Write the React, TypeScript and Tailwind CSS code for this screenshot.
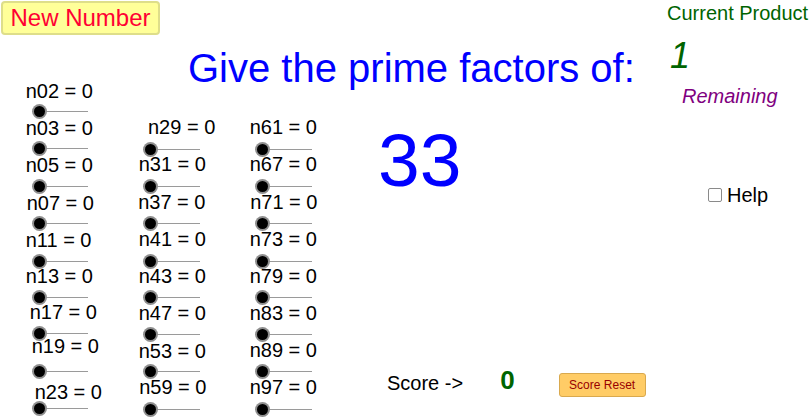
import React from "react";

type Label = { text: string; x: number; y: number };

// GeoGebra canvas: label ink-left x and vertical centre, knob centre y
const col1: Label[] = [
  { text: "n02 = 0", x: 27, y: 90.7 },
  { text: "n03 = 0", x: 27, y: 128.3 },
  { text: "n05 = 0", x: 27, y: 165.3 },
  { text: "n07 = 0", x: 28, y: 203.3 },
  { text: "n11 = 0", x: 27, y: 240 },
  { text: "n13 = 0", x: 27, y: 275.5 },
  { text: "n17 = 0", x: 31, y: 312 },
  { text: "n19 = 0", x: 33, y: 345.5 },
  { text: "n23 = 0", x: 36, y: 391.7 },
];
const col1Knobs = [110.7, 148, 185.7, 223.3, 260.7, 297.3, 333.3, 370.7, 408.3];

const col2: Label[] = [
  { text: "n29 = 0", x: 149.3, y: 127 },
  { text: "n31 = 0", x: 140, y: 163.8 },
  { text: "n37 = 0", x: 139.5, y: 201.7 },
  { text: "n41 = 0", x: 140, y: 238.7 },
  { text: "n43 = 0", x: 140, y: 275.5 },
  { text: "n47 = 0", x: 140, y: 312.5 },
  { text: "n53 = 0", x: 140, y: 351 },
  { text: "n59 = 0", x: 140.5, y: 387 },
];

const col3: Label[] = [
  { text: "n61 = 0", x: 251, y: 127 },
  { text: "n67 = 0", x: 251, y: 164 },
  { text: "n71 = 0", x: 251.5, y: 201.7 },
  { text: "n73 = 0", x: 251, y: 238.7 },
  { text: "n79 = 0", x: 251, y: 275.5 },
  { text: "n83 = 0", x: 251, y: 313 },
  { text: "n89 = 0", x: 251, y: 349.7 },
  { text: "n97 = 0", x: 251, y: 387 },
];
const col23Knobs = [149, 186, 223, 260.7, 297, 334, 371, 409];

function SliderLabel({ text, x, y }: Label) {
  return (
    <div
      className="absolute whitespace-nowrap text-[20px] leading-[20px] text-black"
      style={{ left: x - 1.3, top: y - 10 }}
    >
      {text}
    </div>
  );
}

function Slider({ x, y }: { x: number; y: number }) {
  return (
    <div className="absolute w-[49px] h-px" style={{ left: x, top: y }}>
      <div className="h-px w-full bg-[#9a9a9a]" />
      <div className="absolute -left-[5.5px] -top-[5px] w-[11px] h-[11px] rounded-full bg-black ring-2 ring-[#8f8f8f]" />
    </div>
  );
}

export default function App() {
  return (
    <div className="relative w-[809px] h-[420px] overflow-hidden bg-white font-['Liberation_Sans',Arial,sans-serif]">
      <button className="absolute left-px top-px w-[159px] h-[34px] rounded-[4px] border-2 border-[#dede8a] bg-[#ffff99] text-[24px] leading-none text-[#ff0033] flex items-center justify-center">
        New Number
      </button>

      <div className="absolute left-[188px] top-[48px] text-[40px] leading-[40px] text-[#0000ff] whitespace-nowrap">
        Give the prime factors of:
      </div>
      <div className="absolute left-[378px] top-[123px] text-[75px] leading-[75px] text-[#0000ff]">
        33
      </div>

      {/* right info */}
      <div className="absolute left-[667px] top-[3px] flex flex-col items-start whitespace-nowrap">
        <div className="text-[20px] leading-[20px] text-[#006400]">Current Product</div>
        <div className="mt-[15px] pl-[3px] text-[36px] leading-[36px] italic text-[#006400]">1</div>
        <div className="mt-[12px] pl-[15px] text-[20px] leading-[20px] italic text-[#800080]">Remaining</div>
      </div>
      <label className="absolute left-[708px] top-[185px] flex items-center gap-[5px] text-[20px] leading-[20px] text-black">
        <span className="block w-[14px] h-[14px] rounded-[2px] border border-[#8a8a8a] bg-white" />
        Help
      </label>

      {col1.map((l) => (
        <SliderLabel key={l.text} {...l} />
      ))}
      {col2.map((l) => (
        <SliderLabel key={l.text} {...l} />
      ))}
      {col3.map((l) => (
        <SliderLabel key={l.text} {...l} />
      ))}
      {col1Knobs.map((y) => (
        <Slider key={"a" + y} x={39.3} y={y} />
      ))}
      {col23Knobs.map((y) => (
        <Slider key={"b" + y} x={150.5} y={y} />
      ))}
      {col23Knobs.map((y) => (
        <Slider key={"c" + y} x={262.5} y={y} />
      ))}

      {/* score */}
      <div className="absolute left-[387px] top-[367px] flex items-start whitespace-nowrap">
        <div className="mt-[6px] text-[20px] leading-[20px] text-black">Score -&gt;</div>
        <div className="ml-[37px] text-[26px] leading-[26px] font-bold text-[#006400]">0</div>
        <button className="ml-[44px] mt-[6px] w-[87px] h-[24px] rounded-[3px] border border-[#d9a94e] bg-[#ffcc66] text-[12px] leading-none text-[#990000] flex items-center justify-center">
          Score Reset
        </button>
      </div>
    </div>
  );
}
